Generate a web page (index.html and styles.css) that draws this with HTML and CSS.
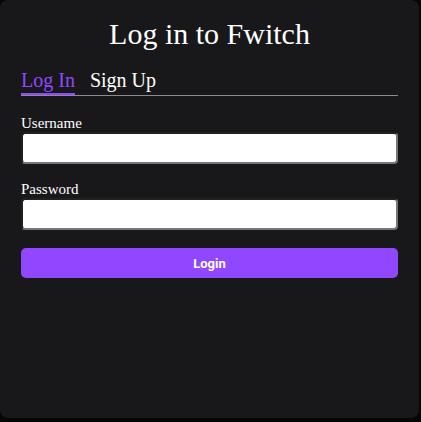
FILE: index.html
```html
<!DOCTYPE html>
<html>
<head>
<meta charset="utf-8">
<link rel="stylesheet" href="styles.css">
</head>
<body>
<div class="modal">
  <h1 class="title">Log in to Fwitch</h1>
  <div class="tabs">
    <span class="tab active">Log In</span>
    <span class="tab">Sign Up</span>
  </div>
  <form class="form">
    <label class="field">
      <span class="label">Username</span>
      <input class="input" type="text">
    </label>
    <label class="field">
      <span class="label">Password</span>
      <input class="input" type="password">
    </label>
    <button class="btn" type="button">Login</button>
  </form>
</div>
</body>
</html>
```
FILE: styles.css
```css
html, body {
  margin: 0;
  padding: 0;
  background: #060607;
  height: 100%;
}
.modal {
  box-sizing: border-box;
  width: 419px;
  height: 418px;
  background: #18181b;
  border-radius: 8px;
  padding: 14px 21px 0 21px;
  color: #fff;
  font-family: "Liberation Serif", "Times New Roman", serif;
}
.title {
  margin: 0;
  font-size: 30px;
  font-weight: 400;
  line-height: 40px;
  text-align: center;
}
.tabs {
  display: flex;
  gap: 15px;
  margin-top: 14px;
  border-bottom: 1px solid #8b8b96;
}
.tab {
  font-size: 20px;
  line-height: 24px;
  padding-bottom: 1px;
  border-bottom: 2px solid transparent;
}
.tab.active {
  color: #9147ff;
  border-bottom-color: #9147ff;
}
.form {
  display: flex;
  flex-direction: column;
  margin-top: 19px;
}
.field {
  display: flex;
  flex-direction: column;
  margin-bottom: 17px;
}
.label {
  font-size: 15px;
  font-weight: 400;
  line-height: 16px;
  margin-bottom: 1px;
}
.input {
  box-sizing: border-box;
  width: 100%;
  height: 32px;
  border: 2px inset #767676;
  border-radius: 4px;
  background: #fff;
}
.btn {
  margin-top: 1px;
  height: 30px;
  border: none;
  border-radius: 5px;
  background: #9147ff;
  color: #fff;
  font-family: Roboto, "Liberation Sans", sans-serif;
  font-weight: 700;
  font-size: 13px;
}
```
